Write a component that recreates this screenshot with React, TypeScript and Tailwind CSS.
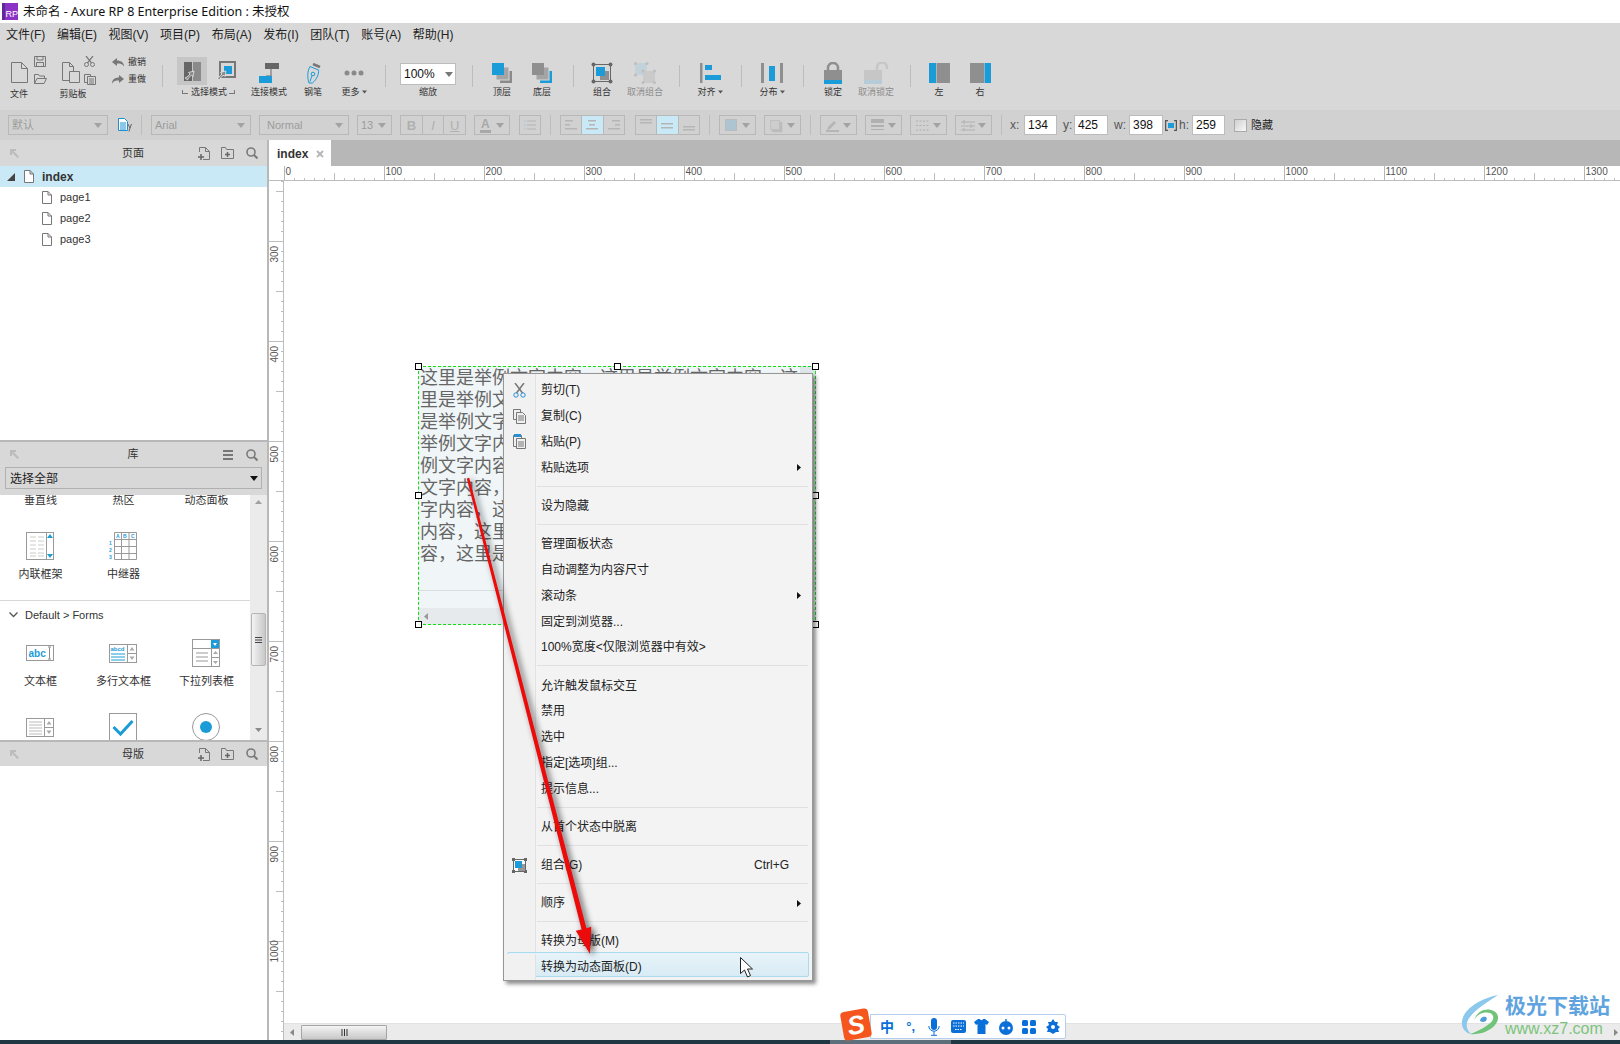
import React from "react";

const B = "#1b9cd8";

function Caret({ c = "#a3a3a3", w = 8, h = 5 }: { c?: string; w?: number; h?: number }) {
  return (
    <svg width={w} height={h} viewBox="0 0 8 5" className="shrink-0">
      <path d="M0 0h8L4 5z" fill={c} />
    </svg>
  );
}

function DocIcon({ w = 10, h = 13, c = "#777" }: { w?: number; h?: number; c?: string }) {
  return (
    <svg width={w} height={h} viewBox="0 0 10 13" className="shrink-0">
      <path d="M.5.500h5.500l3.500 3.500v8.500h-9z M6 .500v3.500h3.500" fill="#fff" stroke={c} />
    </svg>
  );
}

function Sep() {
  return <div className="w-px h-[22px] mt-[19px] bg-[#bdbdbd] shrink-0" />;
}

function Tool({ w, ml, label, children, off, arrow }: { w: number; ml: number; label: string; children: React.ReactNode; off?: boolean; arrow?: boolean }) {
  return (
    <div className="flex flex-col items-center shrink-0" style={{ width: w, marginLeft: ml }}>
      <div className="h-[40px] pt-[14px] flex items-center justify-center">{children}</div>
      <div className={`h-[12px] leading-[12px] text-[9px] whitespace-nowrap flex items-center gap-[2px] ${off ? "text-[#8c8c8c]" : "text-[#333]"}`}>
        {label}
        {arrow && <Caret c="#555" w={5} h={6} />}
      </div>
    </div>
  );
}

function Pointer({ x, y }: { x: number; y: number }) {
  return <path transform={`translate(${x} ${y})`} d="M0 8l2-1 3-3-1.500-1.500L9 1 8 6.500 6.500 5l-3 3-1 2z" fill="#8a8a8a" stroke="#f2f2f2" strokeWidth=".7" />;
}

function Toolbar() {
  return (
    <div className="h-[64px] bg-[#d8d8d8] flex items-start pl-[8px] shrink-0">
      <div className="w-[22px] flex flex-col items-center shrink-0">
        <div className="pt-[16px] h-[37px]">
          <svg width="17" height="21" viewBox="0 0 17 21"><path d="M.5.500h10l6 6v14h-16z M10.500.500v6h6" fill="none" stroke="#777" /></svg>
        </div>
        <div className="mt-[5px] h-[12px] leading-[12px] text-[9px] text-[#333]">文件</div>
      </div>
      <div className="ml-[4px] w-[14px] pt-[10px] flex flex-col gap-[7px] shrink-0">
        <svg width="12" height="11" viewBox="0 0 12 11"><path d="M.5.500h11v10h-11z M3 .500v3.500h6v-3.500 M2.500 10.500v-4h7v4" fill="none" stroke="#777" /></svg>
        <svg width="13" height="10" viewBox="0 0 13 10"><path d="M.5 9.500v-9h4l1 1.500h5v2 M.5 9.500h9.500l2.500-5h-9.500z" fill="none" stroke="#777" /></svg>
      </div>
      <div className="ml-[11px] w-[28px] flex flex-col items-center shrink-0">
        <div className="pt-[16px] h-[37px] -ml-[5px]">
          <svg width="18" height="21" viewBox="0 0 18 21"><path d="M.5.500h7l4 4v5 M7.500.500v4h4 M.5.500v18h7 M7.500 9.500h10v11h-10z" fill="none" stroke="#777" /></svg>
        </div>
        <div className="mt-[5px] h-[12px] leading-[12px] text-[9px] text-[#333] whitespace-nowrap">剪贴板</div>
      </div>
      <div className="-ml-[3px] w-[13px] pt-[10px] flex flex-col gap-[7px] shrink-0">
        <svg width="11" height="11" viewBox="0 0 11 11"><circle cx="2.500" cy="8.500" r="2" fill="none" stroke="#777" /><circle cx="8.500" cy="8.500" r="2" fill="none" stroke="#777" /><path d="M3.500 6.800 9 0M7.500 6.800 2 0" stroke="#777" strokeWidth="1.200" /></svg>
        <svg width="12" height="11" viewBox="0 0 12 11"><path d="M.5.500h6v2 M.5.500v8h3 M3.500 2.500h8v8h-8z M5 5h5M5 7h5M5 9h5" fill="none" stroke="#777" /></svg>
      </div>
      <div className="ml-[15px] pt-[10px] flex flex-col gap-[5px] shrink-0">
        <div className="flex items-center h-[12px] gap-[4px]">
          <svg width="12" height="9" viewBox="0 0 12 9"><path d="M0 4l5-4v2.500c4 0 7 2 7 6-1.500-2.500-3.500-3-7-3v2.500z" fill="#777" /></svg>
          <span className="text-[9px] leading-[12px] text-[#333] w-[18px] whitespace-nowrap">撤销</span>
        </div>
        <div className="flex items-center h-[12px] gap-[4px]">
          <svg width="12" height="9" viewBox="0 0 12 9"><path d="M12 4L7 0v2.500c-4 0-7 2-7 6 1.500-2.500 3.500-3 7-3v2.500z" fill="#777" /></svg>
          <span className="text-[9px] leading-[12px] text-[#333] w-[18px] whitespace-nowrap">重做</span>
        </div>
      </div>
      <div className="ml-[16px] flex shrink-0"><Sep /></div>
      <div className="ml-[14px] w-[61px] flex flex-col shrink-0">
        <div className="flex mt-[11px] h-[28px]">
          <div className="w-[30px] h-[28px] bg-[#c6c6c6] flex items-center justify-center shrink-0">
            <svg width="17" height="19" viewBox="0 0 17 19"><rect width="8" height="19" fill="#666" /><rect x="9" width="8" height="19" fill="#8a8a8a" /><Pointer x={1} y={8} /></svg>
          </div>
          <div className="ml-[10px] flex items-center">
            <svg width="19" height="20" viewBox="0 0 19 20"><rect x="3" y="1" width="15" height="15" fill="none" stroke="#777" strokeWidth="2" /><rect x="7" y="5" width="8" height="8" fill={B} /><Pointer x={0} y={9} /></svg>
          </div>
        </div>
        <div className="mt-px h-[12px] flex items-center text-[9px] leading-[12px] text-[#333] whitespace-nowrap pl-[5px]">
          <span className="w-[6px] h-[4px] border-l border-b border-[#777] shrink-0" />
          <span className="ml-[3px]">选择模式</span>
          <span className="ml-[2px] w-[6px] h-[4px] border-r border-b border-[#777] shrink-0" />
        </div>
      </div>
      <Tool w={38} ml={12} label="连接模式">
        <svg width="20" height="20" viewBox="0 0 20 20"><rect x="6" width="14" height="6" fill="#666" /><path d="M12 6v7H7" fill="none" stroke="#666" /><rect y="13" width="13" height="7" fill={B} /></svg>
      </Tool>
      <Tool w={30} ml={10} label="钢笔">
        <svg width="15" height="21" viewBox="0 0 15 21"><path d="M7 1l7 3" stroke="#777" strokeWidth="2.500" /><path d="M4 3.500l8.500 3.500c.5 4-1.500 9-6 13L3 20C1 14 1.500 8 4 3.500z" fill="none" stroke={B} /><circle cx="7" cy="11" r="1.800" fill="none" stroke={B} /><path d="M6 12.500l-2 6" stroke={B} /></svg>
      </Tool>
      <Tool w={30} ml={11} label="更多" arrow>
        <svg width="20" height="6" viewBox="0 0 20 6"><circle cx="3" cy="3" r="2.500" fill="#8a8a8a" /><circle cx="10" cy="3" r="2.500" fill="#8a8a8a" /><circle cx="17" cy="3" r="2.500" fill="#8a8a8a" /></svg>
      </Tool>
      <div className="ml-[16px] flex shrink-0"><Sep /></div>
      <div className="ml-[14px] w-[56px] flex flex-col items-center shrink-0">
        <div className="mt-[17px] w-[56px] h-[22px] bg-white border border-[#bdbdbd] flex items-center justify-between px-[3px] pr-[2px]">
          <span className="text-[12px] text-[#111] leading-none">100%</span>
          <Caret c="#777" />
        </div>
        <div className="mt-[1px] h-[12px] leading-[12px] text-[9px] text-[#333]">缩放</div>
      </div>
      <div className="ml-[16px] flex shrink-0"><Sep /></div>
      <Tool w={30} ml={14} label="顶层">
        <svg width="20" height="20" viewBox="0 0 20 20"><rect x="8" y="8" width="12" height="12" fill="#8a8a8a" /><rect x="4" y="4" width="13" height="13" fill="#a4a4a4" stroke="#d8d8d8" /><rect width="12" height="12" fill={B} /></svg>
      </Tool>
      <Tool w={30} ml={10} label="底层">
        <svg width="20" height="20" viewBox="0 0 20 20"><rect x="8" y="8" width="12" height="12" fill={B} /><rect x="4" y="4" width="13" height="13" fill="#a4a4a4" stroke="#d8d8d8" /><rect width="12" height="12" fill="#8f8f8f" /></svg>
      </Tool>
      <div className="ml-[16px] flex shrink-0"><Sep /></div>
      <Tool w={30} ml={13} label="组合">
        <svg width="22" height="22" viewBox="0 0 22 22"><rect x="2.500" y="2.500" width="17" height="17" fill="none" stroke="#666" /><circle cx="2.500" cy="2.500" r="2" fill="#666" /><circle cx="19.500" cy="2.500" r="2" fill="#666" /><circle cx="2.500" cy="19.500" r="2" fill="#666" /><circle cx="19.500" cy="19.500" r="2" fill="#666" /><rect x="9" y="9" width="9" height="9" fill="#8f8f8f" /><rect x="5" y="5" width="9" height="9" fill={B} /></svg>
      </Tool>
      <Tool w={40} ml={8} label="取消组合" off>
        <svg width="22" height="22" viewBox="0 0 22 22"><rect x="1" y="1" width="12" height="12" fill="#c2d2da" /><rect x="9" y="9" width="12" height="12" fill="#cacaca" /><g fill="#bdbdbd"><circle cx="1.500" cy="1.500" r="1.500" /><circle cx="13" cy="1.500" r="1.500" /><circle cx="1.500" cy="13" r="1.500" /><circle cx="9" cy="9" r="1.500" /><circle cx="20.500" cy="9" r="1.500" /><circle cx="9" cy="20.500" r="1.500" /><circle cx="20.500" cy="20.500" r="1.500" /></g></svg>
      </Tool>
      <div className="ml-[14px] flex shrink-0"><Sep /></div>
      <Tool w={30} ml={15} label="对齐" arrow>
        <svg width="21" height="20" viewBox="0 0 21 20"><rect width="2.500" height="20" fill="#8f8f8f" /><rect x="5" y="2" width="7" height="5" fill={B} /><rect x="5" y="12" width="16" height="5" fill={B} /></svg>
      </Tool>
      <div className="ml-[16px] flex shrink-0"><Sep /></div>
      <Tool w={30} ml={15} label="分布" arrow>
        <svg width="22" height="20" viewBox="0 0 22 20"><rect width="3" height="20" fill="#8f8f8f" /><rect x="8" y="3" width="6" height="15" fill={B} /><rect x="19" width="3" height="20" fill="#8f8f8f" /></svg>
      </Tool>
      <div className="ml-[16px] flex shrink-0"><Sep /></div>
      <Tool w={30} ml={14} label="锁定">
        <svg width="18" height="22" viewBox="0 0 18 22"><path d="M4 8V6a5 5 0 0 1 10 0v2" fill="none" stroke="#8f8f8f" strokeWidth="2.500" /><rect y="8" width="18" height="10" fill="#8f8f8f" /><rect y="18" width="18" height="4" fill={B} /></svg>
      </Tool>
      <Tool w={40} ml={8} label="取消锁定" off>
        <svg width="25" height="22" viewBox="0 0 25 22"><path d="M13 8V5.500a5 5 0 0 1 10 0V7" fill="none" stroke="#c6c6c6" strokeWidth="2.500" /><rect y="8" width="18" height="10" fill="#c6c6c6" /><rect y="18" width="18" height="4" fill="#b5ccd8" /></svg>
      </Tool>
      <div className="ml-[14px] flex shrink-0"><Sep /></div>
      <Tool w={30} ml={13} label="左">
        <svg width="21" height="20" viewBox="0 0 21 20"><rect width="7" height="20" fill={B} /><rect x="7.500" width="13.500" height="20" fill="#8f8f8f" /></svg>
      </Tool>
      <Tool w={30} ml={11} label="右">
        <svg width="21" height="20" viewBox="0 0 21 20"><rect width="14" height="20" fill="#8f8f8f" /><rect x="14.500" width="6.500" height="20" fill={B} /></svg>
      </Tool>
    </div>
  );
}

function FSelect({ w, ml = 0, text, indent }: { w: number; ml?: number; text: string; indent?: boolean }) {
  return (
    <div className="h-[20px] border border-[#b8b8b8] flex items-center justify-between pl-[3px] pr-[5px] shrink-0" style={{ width: w, marginLeft: ml }}>
      <span className={`text-[11px] leading-none text-[#9c9c9c] whitespace-nowrap ${indent ? "ml-[4px]" : ""}`}>{text}</span>
      <Caret />
    </div>
  );
}

function FBtn({ w, ml, children }: { w: number; ml: number; children: React.ReactNode }) {
  return (
    <div className="h-[20px] border border-[#b8b8b8] flex items-center justify-between pl-[5px] pr-[5px] shrink-0" style={{ width: w, marginLeft: ml }}>
      {children}
      <Caret />
    </div>
  );
}

function Seg({ w, ml, items, on }: { w: number; ml: number; items: React.ReactNode[]; on?: number }) {
  return (
    <div className="h-[20px] border border-[#b8b8b8] flex shrink-0" style={{ width: w, marginLeft: ml }}>
      {items.map((it, i) => (
        <div key={i} className={`flex-1 flex items-center justify-center border-[#b8b8b8] ${i ? "border-l" : ""} ${on === i ? "bg-[#c9e9f7]" : ""}`}>{it}</div>
      ))}
    </div>
  );
}

function Lines({ rows }: { rows: number[][] }) {
  return (
    <svg width="14" height="12" viewBox="0 0 14 12">
      {rows.map((r, i) => <rect key={i} x={r[0]} y={r[1]} width={r[2]} height="1.500" fill="#b5b5b5" />)}
    </svg>
  );
}

function FSep({ ml }: { ml: number }) {
  return <div className="w-px h-[20px] bg-[#bdbdbd] shrink-0" style={{ marginLeft: ml }} />;
}

function XInput({ w, v }: { w: number; v: string }) {
  return (
    <div className="h-[20px] bg-white border border-[#bcbcbc] text-[12px] leading-[18px] text-[#111] pl-[3px] shrink-0" style={{ width: w }}>{v}</div>
  );
}

function Label({ ml, w, t }: { ml: number; w: number; t: string }) {
  return <span className="text-[12px] text-[#555] leading-none shrink-0" style={{ marginLeft: ml, width: w }}>{t}</span>;
}

function FormatBar() {
  return (
    <div className="h-[30px] bg-[#d1d1d1] flex items-center pl-[8px] shrink-0">
      <FSelect w={100} text="默认" />
      <div className="ml-[10px] w-[14px] shrink-0">
        <svg width="14" height="14" viewBox="0 0 14 14"><path d="M.5.500h6l3 3v9h-9z" fill="#fff" stroke="#1b8fd0" /><path d="M2 5h6M2 7h6M2 9h6M2 11h6" stroke="#1b8fd0" /><path d="M10 6l2 4 1.500-4M12 10l-1 3.500" stroke="#666" fill="none" /></svg>
      </div>
      <FSep ml={9} />
      <FSelect w={100} ml={9} text="Arial" />
      <FSelect w={90} ml={8} text="Normal" indent />
      <FSelect w={35} ml={8} text="13" />
      <Seg w={66} ml={8} items={[
        <span key="b" className="text-[13px] font-bold text-[#b0b0b0] leading-none">B</span>,
        <span key="i" className="text-[13px] italic text-[#b0b0b0] leading-none">I</span>,
        <span key="u" className="text-[13px] underline text-[#b0b0b0] leading-none">U</span>,
      ]} />
      <FBtn w={36} ml={8}>
        <span className="text-[12px] font-bold text-[#a8a8a8] leading-none border-b-[3px] border-[#a8a8a8] px-[1px]">A</span>
      </FBtn>
      <div className="h-[20px] w-[22px] ml-[9px] border border-[#b8b8b8] flex items-center justify-center shrink-0">
        <svg width="12" height="10" viewBox="0 0 12 10"><path d="M3 1h9M3 5h9M3 9h9" stroke="#b5b5b5" /><path d="M0 1h2M0 5h2M0 9h2" stroke="#a9c8d8" /></svg>
      </div>
      <FSep ml={9} />
      <Seg w={65} ml={9} on={1} items={[
        <Lines key="1" rows={[[1, 1, 8], [1, 5, 5], [1, 9, 12]]} />,
        <Lines key="2" rows={[[3, 1, 8], [4, 5, 6], [1, 9, 12]]} />,
        <Lines key="3" rows={[[5, 1, 8], [8, 5, 5], [1, 9, 12]]} />,
      ]} />
      <Seg w={65} ml={10} on={1} items={[
        <Lines key="1" rows={[[1, 0, 12], [1, 3, 12]]} />,
        <Lines key="2" rows={[[1, 4, 12], [1, 8, 12]]} />,
        <Lines key="3" rows={[[1, 7, 12], [1, 10, 12]]} />,
      ]} />
      <FSep ml={9} />
      <FBtn w={37} ml={9}><span className="w-[12px] h-[12px] bg-[#adc5d1] border border-[#bbb]" /></FBtn>
      <FBtn w={37} ml={8}><span className="w-[10px] h-[10px] bg-[#cdcdcd] border border-[#c0c0c0] shadow-[2px_2px_1px_#bbb]" /></FBtn>
      <FSep ml={9} />
      <FBtn w={37} ml={9}>
        <svg width="13" height="13" viewBox="0 0 13 13"><path d="M2 8l6-6 2 2-6 6-3 1z" fill="#b5b5b5" /><rect y="11" width="13" height="2" fill="#b5b5b5" /></svg>
      </FBtn>
      <FBtn w={37} ml={8}>
        <svg width="13" height="12" viewBox="0 0 13 12"><rect width="13" height="4" fill="#b0b0b0" /><rect y="6" width="13" height="2" fill="#b0b0b0" /><rect y="10" width="13" height="1" fill="#b0b0b0" /></svg>
      </FBtn>
      <FBtn w={37} ml={8}>
        <svg width="13" height="11" viewBox="0 0 13 11"><path d="M0 1h13M0 5.500h13M0 10h13" stroke="#b0b0b0" strokeDasharray="2 1.500" /></svg>
      </FBtn>
      <FBtn w={37} ml={8}>
        <svg width="14" height="11" viewBox="0 0 14 11"><path d="M0 2h14M0 6h14M0 10h14" stroke="#b0b0b0" /><path d="M3 0v4M10 4v4M3 8v3" stroke="#b0b0b0" /></svg>
      </FBtn>
      <FSep ml={9} />
      <Label ml={8} w={14} t="x:" />
      <XInput w={33} v="134" />
      <Label ml={6} w={11} t="y:" />
      <XInput w={34} v="425" />
      <Label ml={6} w={15} t="w:" />
      <XInput w={34} v="398" />
      <div className="ml-[2px] w-[12px] shrink-0">
        <svg width="12" height="11" viewBox="0 0 12 11"><path d="M3 .500H.5v10H3M9 .500h2.500v10H9" fill="none" stroke="#555" strokeWidth="1.500" /><rect x="3" y="3" width="6" height="5" fill={B} /></svg>
      </div>
      <Label ml={2} w={13} t="h:" />
      <XInput w={33} v="259" />
      <div className="ml-[9px] w-[13px] h-[13px] border border-[#aaa] bg-gradient-to-br from-[#d0d0d0] to-[#f8f8f8] shrink-0" />
      <span className="ml-[4px] text-[11px] text-[#222] leading-none">隐藏</span>
    </div>
  );
}

function CornerArrow() {
  return (
    <svg width="9" height="9" viewBox="0 0 9 9" className="shrink-0"><path d="M0 0h6v2H3.500L9 7.500 7.500 9 2 3.500V6H0z" fill="#bcbcbc" /></svg>
  );
}
function AddPage() {
  return <svg width="12" height="13" viewBox="0 0 12 13"><path d="M1.500 5V.5h6l4 4v8H5 M7.500.5v4h4" fill="none" stroke="#777" /><path d="M3 7v6M0 10h6" stroke="#666" strokeWidth="1.500" /></svg>;
}
function AddFolder() {
  return <svg width="13" height="12" viewBox="0 0 13 12"><path d="M.5 11.500v-11h4l1 2h7v9z" fill="none" stroke="#777" /><path d="M6.500 5v5M4 7.500h5" stroke="#666" strokeWidth="1.500" /></svg>;
}
function Search() {
  return <svg width="12" height="12" viewBox="0 0 12 12"><circle cx="5" cy="5" r="4" fill="none" stroke="#7a7a7a" strokeWidth="1.600" /><path d="M8 8l3.500 3.500" stroke="#7a7a7a" strokeWidth="2" /></svg>;
}

function PanelHeader({ title, right, h = 26 }: { title: string; right: React.ReactNode; h?: number }) {
  return (
    <div className="bg-[#d8d8d8] flex items-center pl-[10px] relative shrink-0" style={{ height: h }}>
      <CornerArrow />
      <div className="absolute left-[118px] w-[30px] text-center text-[11px] text-[#333] leading-none">{title}</div>
      <div className="ml-auto flex items-center">{right}</div>
    </div>
  );
}

function Lib({ label, children }: { label: string; children: React.ReactNode }) {
  return (
    <div className="flex flex-col items-center">
      <div className="h-[32px] flex items-center justify-center pr-[2px]">{children}</div>
      <div className="mt-[5px] h-[14px] leading-[14px] text-[11px] text-[#333] whitespace-nowrap">{label}</div>
    </div>
  );
}

function LeftPanel() {
  return (
    <div className="w-[269px] border-r-2 border-[#b8b8b8] flex flex-col shrink-0 bg-white">
      <PanelHeader title="页面" right={<><AddPage /><div className="w-[11px]" /><AddFolder /><div className="w-[12px]" /><Search /><div className="w-[9px]" /></>} />
      <div className="h-[274px] shrink-0">
        <div className="h-[21px] bg-[#c9e9f7] flex items-center pl-[7px]">
          <svg width="8" height="8" viewBox="0 0 8 8"><path d="M8 0v8H0z" fill="#444" /></svg>
          <span className="ml-[9px] flex"><DocIcon /></span>
          <span className="ml-[8px] text-[12px] font-bold text-[#333] leading-none">index</span>
        </div>
        {["page1", "page2", "page3"].map((p) => (
          <div key={p} className="h-[21px] flex items-center pl-[42px]">
            <DocIcon />
            <span className="ml-[8px] text-[11px] text-[#333] leading-none">{p}</span>
          </div>
        ))}
      </div>
      <div className="border-t-2 border-[#b8b8b8] shrink-0">
        <PanelHeader title="库" h={25} right={<><svg width="10" height="10" viewBox="0 0 10 10"><path d="M0 1h10M0 5h10M0 9h10" stroke="#777" strokeWidth="1.800" /></svg><div className="w-[13px]" /><Search /><div className="w-[9px]" /></>} />
      </div>
      <div className="h-[28px] bg-[#d8d8d8] px-[5px] shrink-0">
        <div className="h-[22px] border border-[#b0b0b0] flex items-center justify-between pl-[4px] pr-[3px]">
          <span className="text-[12px] text-[#222] leading-none pt-px">选择全部</span>
          <Caret c="#111" />
        </div>
      </div>
      <div className="h-[245px] flex overflow-hidden shrink-0">
        <div className="w-[250px] shrink-0 overflow-hidden">
          <div className="w-[249px] grid grid-cols-3 -mt-[2px] -ml-px h-[14px] text-center text-[11px] leading-[14px] text-[#333]">
            <span>垂直线</span><span>热区</span><span>动态面板</span>
          </div>
          <div className="w-[249px] grid grid-cols-3 mt-[23px] -ml-px">
            <Lib label="内联框架">
              <svg width="28" height="28" viewBox="0 0 28 28"><rect x=".5" y=".5" width="27" height="27" fill="#fff" stroke="#999" /><path d="M20.500 0v28" stroke="#999" /><path d="M4 5h6M12 5h6M4 9h6M12 9h6M4 13h6M12 13h6M4 17h6M12 17h6M4 21h6M12 21h6M4 24h6M12 24h6" stroke="#ccc" /><path d="M24 2l3 4h-6z M24 26l3-4h-6z" fill={B} /></svg>
            </Lib>
            <Lib label="中继器">
              <svg width="28" height="28" viewBox="0 0 28 28"><path d="M5.500.5h22v27h-22zM5.500 7.500h22M5.500 14.500h22M5.500 21.500h22M12.500.5v27M20 .5v27" fill="none" stroke="#999" /><g fill={B} fontSize="5" fontWeight="700" fontFamily="Liberation Sans"><text x="7" y="6">A</text><text x="14" y="6">B</text><text x="22" y="6">C</text><text x="0" y="13">1</text><text x="0" y="20">2</text><text x="0" y="27">3</text></g></svg>
            </Lib>
          </div>
          <div className="mt-[19px] h-px bg-[#d8d8d8]" />
          <div className="mt-[7px] h-[14px] flex items-center pl-[9px]">
            <svg width="9" height="6" viewBox="0 0 9 6"><path d="M.5.500l4 4 4-4" fill="none" stroke="#555" strokeWidth="1.300" /></svg>
            <span className="ml-[7px] text-[11px] leading-none text-[#333]">Default &gt; Forms</span>
          </div>
          <div className="w-[249px] grid grid-cols-3 mt-[15px] -ml-px">
            <Lib label="文本框">
              <svg width="28" height="16" viewBox="0 0 28 16"><rect x=".5" y=".5" width="27" height="15" fill="#fff" stroke="#999" /><text x="2.500" y="12" fontSize="10" fontWeight="700" fill={B} fontFamily="Liberation Sans">abc</text><path d="M23.500 2.500v11M22 2h3M22 14h3" stroke="#888" /></svg>
            </Lib>
            <Lib label="多行文本框">
              <svg width="28" height="19" viewBox="0 0 28 19"><rect x=".5" y=".5" width="27" height="18" fill="#fff" stroke="#999" /><path d="M18.500 0v19M18.500 9.500h9" stroke="#999" /><text x="1.500" y="7" fontSize="6" fontWeight="700" fill={B} fontFamily="Liberation Sans">abcd</text><path d="M2 10h14M2 13h14M2 16h14" stroke={B} /><path d="M23 3l2.500 3.500h-5zM23 16l-2.500-3.500h5z" fill="#aaa" /></svg>
            </Lib>
            <Lib label="下拉列表框">
              <svg width="28" height="28" viewBox="0 0 28 28"><rect x=".5" y=".5" width="27" height="27" fill="#fff" stroke="#999" /><path d="M0 9.500h28M19.500 9v19M19.500 18.500h9" stroke="#999" /><rect x="19" y="1" width="8" height="8" fill={B} /><path d="M21 4h4l-2 3z" fill="#fff" /><path d="M4 14h12M4 18h12M4 22h12" stroke="#999" /><path d="M23.500 12l2.500 3h-5zM23.500 25l-2.500-3h5z" fill="#aaa" /></svg>
            </Lib>
          </div>
          <div className="w-[249px] grid grid-cols-3 mt-[18px] -ml-[2px]">
            <div className="flex justify-center h-[32px] items-center mt-[5px]">
              <svg width="28" height="19" viewBox="0 0 28 19"><rect x=".5" y=".5" width="27" height="18" fill="#fff" stroke="#999" /><path d="M18.500 0v19M18.500 9.500h9" stroke="#999" /><path d="M3 4h13M3 7h13M3 10h13M3 13h13M3 16h13" stroke="#bbb" /><path d="M23 3l2.500 3.500h-5zM23 16l-2.500-3.500h5z" fill="#aaa" /></svg>
            </div>
            <div className="flex justify-center h-[32px] items-center mt-[5px]">
              <svg width="28" height="28" viewBox="0 0 28 28"><rect x=".5" y=".5" width="27" height="27" fill="#fff" stroke="#999" /><path d="M4.500 14l7 7L23.500 8" fill="none" stroke={B} strokeWidth="3" /></svg>
            </div>
            <div className="flex justify-center h-[32px] items-center mt-[5px]">
              <svg width="28" height="28" viewBox="0 0 28 28"><circle cx="14" cy="14" r="13.500" fill="#fff" stroke="#999" /><circle cx="14" cy="14" r="6" fill={B} /></svg>
            </div>
          </div>
        </div>
        <div className="w-[17px] bg-[#ebebeb] flex flex-col items-center shrink-0">
          <svg width="7" height="4" viewBox="0 0 7 4" className="mt-[5px]"><path d="M3.500 0L7 4H0z" fill="#a0a0a0" /></svg>
          <div className="mt-[109px] w-[15px] h-[53px] rounded-[2px] border border-[#b5b5b5] bg-gradient-to-r from-[#f4f4f4] to-[#c8c8c8] flex items-center justify-center">
            <svg width="7" height="6" viewBox="0 0 7 6"><path d="M0 .5h7M0 3h7M0 5.500h7" stroke="#444" /></svg>
          </div>
          <svg width="7" height="4" viewBox="0 0 7 4" className="mt-[62px]"><path d="M3.500 4L7 0H0z" fill="#8a8a8a" /></svg>
        </div>
      </div>
      <div className="border-t-[2px] border-[#b8b8b8] shrink-0">
        <PanelHeader title="母版" h={24} right={<><AddPage /><div className="w-[11px]" /><AddFolder /><div className="w-[12px]" /><Search /><div className="w-[9px]" /></>} />
      </div>
    </div>
  );
}

function HRuler() {
  const ticks: React.ReactNode[] = [];
  for (let v = 0; v <= 1340; v += 10) {
    const x = 15.5 + v;
    const h = v % 100 === 0 ? 15 : v % 50 === 0 ? 8 : 3;
    ticks.push(<path key={v} d={`M${x} 15V${15 - h}`} stroke={v % 100 === 0 ? "#b5b5b5" : "#bdbdbd"} />);
    if (v % 100 === 0) ticks.push(<text key={`t${v}`} x={x + 1} y={9} fontSize="10" fill="#555" fontFamily="Liberation Sans">{v}</text>);
  }
  return (
    <svg width="1351" height="15" viewBox="0 0 1351 15" className="block shrink-0 bg-white">
      {ticks}
      <path d="M0 14.500h1351" stroke="#bdbdbd" />
    </svg>
  );
}

function VRuler() {
  const ticks: React.ReactNode[] = [];
  for (let v = 240; v <= 1090; v += 10) {
    const y = v - 240 + 0.5;
    const w = v % 100 === 0 ? 15 : v % 50 === 0 ? 8 : 3;
    ticks.push(<path key={v} d={`M15 ${y}H${15 - w}`} stroke="#bdbdbd" />);
    if (v % 100 === 0) ticks.push(<text key={`t${v}`} transform={`translate(9 ${y + 21}) rotate(-90)`} fontSize="10" fill="#555" fontFamily="Liberation Sans">{v}</text>);
  }
  return (
    <svg width="15" height="859" viewBox="0 0 15 859" className="block shrink-0 bg-white">
      {ticks}
      <path d="M14.500 0v859" stroke="#bdbdbd" />
    </svg>
  );
}

const LINES = [
  "这里是举例文字内容，这里是举例文字内容，这",
  "里是举例文",
  "是举例文字",
  "举例文字内",
  "例文字内容",
  "文字内容，",
  "字内容，这",
  "内容，这里",
  "容，这里是",
];

function Handle({ cls }: { cls: string }) {
  return <div className={`absolute w-[7px] h-[7px] bg-white border border-black ${cls}`} />;
}

function Widget() {
  return (
    <div className="absolute left-[134px] top-[185px] w-[398px] h-[259px]">
      <div className="h-[224px] bg-[#f0f6f8] flex">
        <div className="flex-1 pl-[2px] pt-px overflow-hidden">
          {LINES.map((l) => (
            <div key={l} className="h-[22px] leading-[22px] text-[18px] text-[#666] whitespace-nowrap">{l}</div>
          ))}
        </div>
        <div className="w-[16px] bg-[#dfe6e9] shrink-0" />
      </div>
      <div className="h-[18px] bg-[#f0f6f8] border-t border-[#d8dde0]" />
      <div className="h-[17px] bg-[#e6eaec] flex items-center pl-[6px]">
        <svg width="4" height="7" viewBox="0 0 4 7"><path d="M4 0v7L0 3.500z" fill="#999" /></svg>
      </div>
      <div className="absolute inset-0 border border-dashed border-[#10e010]" />
      <Handle cls="-left-[3px] -top-[3px]" />
      <Handle cls="left-[196px] -top-[3px]" />
      <Handle cls="-right-[3px] -top-[3px]" />
      <Handle cls="-left-[3px] top-[126px]" />
      <Handle cls="-right-[3px] top-[126px]" />
      <Handle cls="-left-[3px] -bottom-[3px]" />
      <Handle cls="-right-[3px] -bottom-[3px]" />
    </div>
  );
}

function MenuItem({ t, icon, arrow, kbd, hi }: { t: string; icon?: React.ReactNode; arrow?: boolean; kbd?: string; hi?: boolean }) {
  return (
    <div className="h-[25.8px] flex relative">
      {hi && <div className="absolute left-[3px] right-[3px] -top-[2px] bottom-[3px] rounded-[2px] border border-[#a9dbee] bg-gradient-to-b from-[#e8f3f9] to-[#d8ebf5]" />}
      <div className="w-[32px] border-r border-[#e2e2e2] bg-[#f1f1f1] flex items-center justify-center shrink-0 relative">{icon}</div>
      <div className="flex-1 flex items-center pl-[5px] relative">
        <span className="text-[12px] text-[#222] leading-none whitespace-nowrap">{t}</span>
        {kbd && <span className="absolute left-[218px] text-[12px] text-[#222] leading-none">{kbd}</span>}
        {arrow && <svg width="4" height="7" viewBox="0 0 4 7" className="absolute left-[261px]"><path d="M0 0v7l4-3.500z" fill="#111" /></svg>}
      </div>
    </div>
  );
}

function MenuSep() {
  return (
    <div className="h-[12.4px] flex">
      <div className="w-[32px] border-r border-[#e2e2e2] bg-[#f1f1f1] shrink-0" />
      <div className="flex-1 flex items-center pl-px pr-[4px]"><div className="w-full h-[2px] border-t border-[#e0e0e0] border-b-white" /></div>
    </div>
  );
}

function ContextMenu() {
  return (
    <div className="absolute left-[503px] top-[373px] w-[310px] border border-[#979797] bg-[#f3f3f3] shadow-[3px_3px_4px_rgba(0,0,0,0.45)]">
      <div className="h-[3.5px] flex"><div className="w-[32px] border-r border-[#e2e2e2] bg-[#f1f1f1]" /></div>
      <MenuItem t="剪切(T)" icon={
        <svg width="13" height="15" viewBox="0 0 13 15"><path d="M2 0l7.500 10M11 0L3.500 10" stroke="#777" strokeWidth="1.500" /><circle cx="3" cy="12" r="2.200" fill="none" stroke="#2a8fd0" /><circle cx="10" cy="12" r="2.200" fill="none" stroke="#2a8fd0" /></svg>
      } />
      <MenuItem t="复制(C)" icon={
        <svg width="13" height="15" viewBox="0 0 13 15"><path d="M.5.500h7v3M.5.500v10h3 M3.500 3.500h6l3 3v8h-9z M5 7h6M5 9h6M5 11h6" fill="none" stroke="#777" /></svg>
      } />
      <MenuItem t="粘贴(P)" icon={
        <svg width="13" height="15" viewBox="0 0 13 15"><path d="M.5 1.500h8v3M.5 1.500v11h3 M3.500 4.500h9v10h-9z M5 8h6M5 10h6M5 12h6" fill="none" stroke="#777" /><rect x="1" y="0" width="7" height="3" fill="#2a8fd0" /></svg>
      } />
      <MenuItem t="粘贴选项" arrow />
      <MenuSep />
      <MenuItem t="设为隐藏" />
      <MenuSep />
      <MenuItem t="管理面板状态" />
      <MenuItem t="自动调整为内容尺寸" />
      <MenuItem t="滚动条" arrow />
      <MenuItem t="固定到浏览器..." />
      <MenuItem t="100%宽度<仅限浏览器中有效>" />
      <MenuSep />
      <MenuItem t="允许触发鼠标交互" />
      <MenuItem t="禁用" />
      <MenuItem t="选中" />
      <MenuItem t="指定[选项]组..." />
      <MenuItem t="提示信息..." />
      <MenuSep />
      <MenuItem t="从首个状态中脱离" />
      <MenuSep />
      <MenuItem t="组合(G)" kbd="Ctrl+G" icon={
        <svg width="15" height="15" viewBox="0 0 15 15"><rect x="1.500" y="1.500" width="12" height="12" fill="#fff" stroke="#666" /><g fill="#666"><rect width="3" height="3" /><rect x="12" width="3" height="3" /><rect y="12" width="3" height="3" /><rect x="12" y="12" width="3" height="3" /></g><rect x="6" y="6" width="7" height="7" fill="#999" /><rect x="3" y="3" width="7" height="7" fill={B} /></svg>
      } />
      <MenuSep />
      <MenuItem t="顺序" arrow />
      <MenuSep />
      <MenuItem t="转换为母版(M)" />
      <MenuItem t="转换为动态面板(D)" hi />
    </div>
  );
}

function Ime() {
  const c = "#0a6fd8";
  return (
    <div className="absolute left-[842px] top-[1010px] flex items-end h-[29px]">
      <div className="absolute left-0 top-0 w-[28px] h-[29px] bg-[#f4561e] rounded-[4px] -rotate-[10deg] flex items-center justify-center z-10">
        <span className="text-[26px] leading-none font-bold italic text-white [font-family:'Liberation_Sans',sans-serif]">S</span>
      </div>
      <div className="ml-[28px] w-[196px] h-[25px] bg-white border border-[#b5cdee] rounded-r-[2px] flex items-center pl-[4px]">
        <div className="w-[24px] flex justify-center"><span className="text-[14px] leading-none font-bold text-[#0a6fd8]">中</span></div>
        <div className="w-[24px] flex justify-center"><span className="text-[13px] leading-none font-bold text-[#0a6fd8] [font-family:'Liberation_Sans',sans-serif]">°,</span></div>
        <div className="w-[24px] flex justify-center">
          <svg width="12" height="18" viewBox="0 0 12 18"><rect x="3" width="6" height="12" rx="3" fill={c} /><path d="M.8 8a5.200 5.200 0 0 0 10.400 0M6 13.500V17M3 17.300h6" fill="none" stroke={c} /></svg>
        </div>
        <div className="w-[24px] flex justify-center">
          <svg width="15" height="13" viewBox="0 0 15 13"><rect width="15" height="13" rx="2" fill={c} /><path d="M2 3h11M2 6h11M4 9.500h7" stroke="#fff" strokeDasharray="1.500 1" /></svg>
        </div>
        <div className="w-[24px] flex justify-center">
          <svg width="15" height="15" viewBox="0 0 15 15"><path d="M4 0h2c0 1.500 3 1.500 3 0h2l4 3-2 3-1.500-1v10h-8V5L2 6 0 3z" fill={c} /></svg>
        </div>
        <div className="w-[24px] flex justify-center">
          <svg width="16" height="16" viewBox="0 0 16 16"><circle cx="8" cy="9" r="7" fill={c} /><path d="M8 2V0" stroke={c} strokeWidth="1.500" /><circle cx="5" cy="9" r="1.500" fill="#fff" /><circle cx="11" cy="9" r="1.500" fill="#fff" /></svg>
        </div>
        <div className="w-[24px] flex justify-center">
          <svg width="14" height="14" viewBox="0 0 14 14"><g fill={c}><rect width="6" height="6" rx="1.500" /><rect x="8" width="6" height="6" rx="1.500" /><rect y="8" width="6" height="6" rx="1.500" /><rect x="8" y="8" width="6" height="6" rx="1.500" /></g></svg>
        </div>
        <div className="w-[24px] flex justify-center">
          <svg width="14" height="15" viewBox="0 0 14 15"><path d="M7 0l2 3h3l-1 3 3 2-2 2 1 3-3 0-3 2-3-2-3 0 1-3-2-2 3-2-1-3h3z" fill={c} /><circle cx="7" cy="8" r="2" fill="#fff" /></svg>
        </div>
      </div>
    </div>
  );
}

function Watermark() {
  return (
    <div className="absolute left-[1460px] top-[994px] flex items-start">
      <svg width="44" height="44" viewBox="0 0 44 44" className="shrink-0">
        <path d="M38 1C22 4 4 14 2 27c-1 7 3 12 9 13-5-4-6-11-1-17C15 16 27 8 38 1z" fill="#8cc8ee" />
        <path d="M14 27c2-6 9-10 16-8 5 2 4 8-1 11-5 4-13 8-19 10 8 1 19-2 25-9 5-6 4-13-4-15-8-2-15 3-17 11z" fill="#6fc47a" />
        <path d="M20 26c1-3 4-4 6-3 2 2 0 5-3 5-2 0-3-1-3-2z" fill="#4f9ed8" />
      </svg>
      <div className="ml-[1px] flex flex-col">
        <span className="text-[21px] leading-[24px] font-bold text-[#5fa4de] whitespace-nowrap">极光下载站</span>
        <span className="mt-[3px] text-[16px] leading-[16px] text-[#7cc47c] whitespace-nowrap [font-family:'Liberation_Sans',sans-serif]">www.xz7.com</span>
      </div>
    </div>
  );
}

export default function App() {
  return (
    <div className="w-[1620px] h-[1044px] relative overflow-hidden bg-white flex flex-col [font-family:'Liberation_Sans','Noto_Sans_CJK_SC',sans-serif]">
      <div className="h-[23px] bg-white flex items-center pl-[2px] shrink-0">
        <div className="w-[16px] h-[17px] bg-[#8a33c6] flex items-end justify-end shrink-0 border-l-[3px] border-[#5d2a96]">
          <span className="text-[9px] leading-[11px] text-white">RP</span>
        </div>
        <span className="ml-[5px] pt-[2px] text-[12.5px] leading-none text-[#111] whitespace-nowrap [font-family:'Noto_Sans','Noto_Sans_CJK_SC',sans-serif]">未命名 - Axure RP 8 Enterprise Edition : 未授权</span>
      </div>
      <div className="h-[23px] bg-[#d8d8d8] flex items-center pl-[6px] gap-[11.6px] text-[12px] leading-none text-[#222] shrink-0">
        {["文件(F)", "编辑(E)", "视图(V)", "项目(P)", "布局(A)", "发布(I)", "团队(T)", "账号(A)", "帮助(H)"].map((m) => (
          <span key={m} className="whitespace-nowrap">{m}</span>
        ))}
      </div>
      <Toolbar />
      <FormatBar />
      <div className="flex-1 flex min-h-0">
        <LeftPanel />
        <div className="flex-1 flex flex-col min-w-0">
          <div className="h-[26px] bg-[#b7b7b7] flex shrink-0">
            <div className="w-[62px] bg-white flex items-center pl-[8px] pt-px">
              <span className="text-[12px] leading-none text-[#333] font-bold">index</span>
              <svg width="8" height="8" viewBox="0 0 8 8" className="ml-[8px]"><path d="M1 1l6 6M7 1L1 7" stroke="#b5b5b5" strokeWidth="1.800" /></svg>
            </div>
          </div>
          <HRuler />
          <div className="flex-1 flex min-h-0">
            <VRuler />
            <div className="flex-1 relative flex flex-col">
              <div className="flex-1" />
              <Widget />
              <div className="h-[17px] bg-[#ebebeb] border-t border-[#e2e2e2] flex items-center pl-[6px] shrink-0">
                <svg width="4" height="7" viewBox="0 0 4 7"><path d="M4 0v7L0 3.500z" fill="#888" /></svg>
                <div className="ml-[7px] w-[86px] h-[15px] border border-[#a5a5a5] rounded-[1px] bg-gradient-to-b from-[#f4f4f4] to-[#c8c8c8] flex items-center justify-center">
                  <svg width="7" height="7" viewBox="0 0 7 7"><path d="M1 0v7M3.500 0v7M6 0v7" stroke="#333" /></svg>
                </div>
                <svg width="4" height="7" viewBox="0 0 4 7" className="ml-auto mr-[2px]"><path d="M0 0v7l4-3.500z" fill="#888" /></svg>
              </div>
            </div>
          </div>
        </div>
      </div>
      <div className="h-[4px] bg-[#1f3743] flex shrink-0">
        <div className="ml-[830px] w-[121px] bg-[#5c6f7a]" />
      </div>
      <ContextMenu />
      <svg width="140" height="495" viewBox="460 470 140 495" className="absolute left-[460px] top-[470px] drop-shadow-[3px_2px_3px_rgba(0,0,0,0.65)]">
        <path d="M466.800 478.500L469.200 477.700L586.400 928.200L591.200 926.800L590 954L575.800 930.800L581.600 929.400Z" fill="#ec0a0a" />
      </svg>
      <svg width="13" height="21" viewBox="0 0 13 21" className="absolute left-[740px] top-[957px]">
        <path d="M.5.500v16l4-3.500 3 7 3-1.500-3-6.500h5z" fill="#fff" stroke="#222" />
      </svg>
      <Ime />
      <Watermark />
    </div>
  );
}
